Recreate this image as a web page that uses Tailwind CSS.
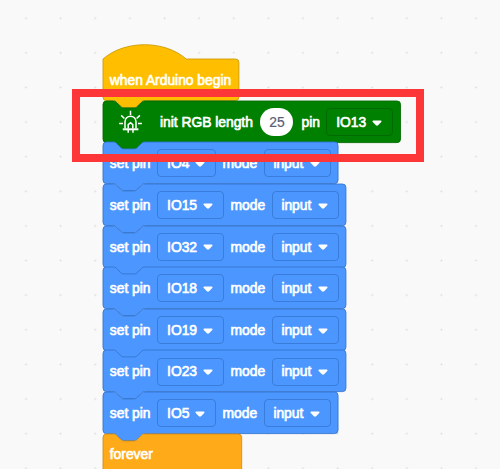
<!DOCTYPE html>
<html lang="en">
<head>
<meta charset="utf-8">
<title>Blocks workspace</title>
<script src="https://cdn.jsdelivr.net/npm/@tailwindcss/browser@4"></script>
</head>
<body class="relative h-[469px] w-[500px] overflow-hidden bg-[#f9f9f9] font-['Liberation_Sans',Arial,sans-serif] text-[13.87px] leading-none text-white">
<svg class="absolute inset-0 h-full w-full">
  <defs><pattern id="dots" x="8.7" y="0.9" width="34.62" height="34.62" patternUnits="userSpaceOnUse"><path d="M16.3 17.3h2M17.3 16.3v2" stroke="#dedede" stroke-width="1"/></pattern></defs>
  <rect width="500" height="469" fill="url(#dots)"/>
</svg>
<main id="stack" class="relative flex flex-col pl-[102.6px] pt-[59.2px]"></main>
<div class="absolute left-[72px] top-[89px] h-[73px] w-[351.5px] border-8 border-[#fd3737]"></div>
<script>
const S = 0.8667;
const NOTCH = 'c2 0 3 1 4 2l4 4c1 1 2 2 4 2h12c2 0 3-1 4-2l4-4c1-1 2-2 4-2';
const TAB = 'c-2 0-3 1-4 2l-4 4c-1 1-2 2-4 2h-12c-2 0-3-1-4-2l-4-4c-1-1-2-2-4-2';
function shape(w, fill, stroke, hat) {
  const top = hat ? `M0 0c25-22 71-22 96 0H${w - 4}` : `M0 4A4 4 0 0 1 4 0H12${NOTCH}H${w - 4}`;
  return `<svg class="col-start-1 row-start-1 h-[41.6px] w-full overflow-visible" viewBox="0 0 ${w} 48" preserveAspectRatio="none"><path d="${top}a4 4 0 0 1 4 4V44a4 4 0 0 1-4 4H48${TAB}H4a4 4 0 0 1-4-4z" fill="${fill}" stroke="${stroke}" stroke-width="1"/></svg>`;
}
const word = (t, cls) => `<span class="block shrink-0 whitespace-nowrap pt-[1.6px] tracking-[-0.02px] [-webkit-text-stroke:0.65px_white] ${cls}">${t}</span>`;
const menu = (t, cls) => `<span class="flex h-[28px] shrink-0 items-center justify-between rounded-[4px] border pl-[8.8px] pr-[10px] ${cls}">${word(t, '')}<svg class="mt-[2px] h-[6.5px] w-[10px]" viewBox="0 0 9 6"><path d="M1.2.4h6.6c.9 0 1.2.8.6 1.4L5.5 4.9c-.6.6-1.4.6-2 0L.6 1.800C0 1.200.3.4 1.200.4z" fill="#fff"/></svg></span>`;
const row = (w, fill, stroke, body, hat) => `<section class="grid h-[41.62px] shrink-0" style="width:${w * S}px">${shape(w, fill, stroke, hat)}<div class="relative col-start-1 row-start-1 flex h-[41.6px] items-center pl-[7.2px] pt-[0.5px]">${body}</div></section>`;
const led = `<svg class="ml-[9.5px] h-[24px] w-[24px] shrink-0" viewBox="0 0 24 24" fill="none" stroke="#fff" stroke-width="1.5"><path d="M6 18.500V11.700a5.500 5.500 0 0 1 11 0V18.500M11.500.7V5M.2 13.500H4M19 13.500h3.900M2.200 5.400l3.200 3.100M20.900 5.400l-3.300 3.100M9.200 18.500v-3.800l2.300-2 2.300 2v3.800"/><path d="M3.800 19.300h15.600" stroke-width="2"/><path d="M9.200 20v2.800M14 20v2.800"/></svg>`;
let html = row(156.8, '#ffbf00', '#cc9900', word('when Arduino begin', ''), true);
html += row(343.3, '#008000', '#006900', led + word('init RGB length', 'ml-[16.7px] w-[100.5px]') +
  `<span class="flex h-[27.5px] w-[33px] shrink-0 items-center justify-center rounded-full bg-white pt-[2px] text-[#575e75] [-webkit-text-stroke:0.2px_#575e75]">25</span>` +
  word('pin', 'ml-[8px] w-[25px]') + menu('IO13', 'w-[67px] border-[#006900]'), false);
for (const pin of ['IO4', 'IO15', 'IO32', 'IO18', 'IO19', 'IO23', 'IO5']) {
  const short = pin.length === 3;
  html += row(short ? 271.2 : 280.3, '#4c97ff', '#3373cc', word('set pin', 'w-[47.5px]') +
    menu(pin, (short ? 'w-[59px]' : 'w-[67px]') + ' border-[#3a7cda]') + word('mode', 'ml-[6.3px] w-[41px]') +
    menu('input', 'w-[67px] border-[#3a7cda]'), false);
}
html += row(160, '#ffab19', '#cf8b17', word('forever', '-mt-[1px]'), false);
document.getElementById('stack').innerHTML = html;
</script>
</body>
</html>
